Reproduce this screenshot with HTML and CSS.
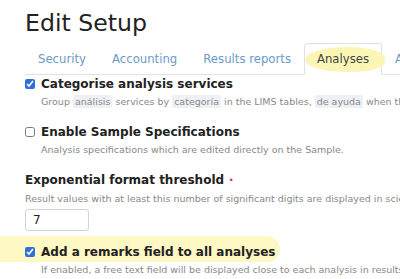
FILE: index.html
```html
<!DOCTYPE html>
<html lang="en">
<head>
  <meta charset="UTF-8" />
  <meta name="viewport" content="width=device-width, initial-scale=1.0" />
  <title>Edit Setup</title>
  <link rel="stylesheet" href="styles.css">
</head>
<body>
  <div class="page">
    <h1>Edit Setup</h1>

    <ul class="tabs">
      <li><a href="#security">Security</a></li>
      <li><a href="#accounting">Accounting</a></li>
      <li><a href="#results">Results reports</a></li>
      <li class="active"><a href="#analyses"><span class="marker">Analyses</span></a></li>
      <li><a href="#appearance">Appearance</a></li>
    </ul>

    <div class="fields">
      <div class="field">
        <label class="check"><input type="checkbox" checked> Categorise analysis services</label>
        <p class="help">Group <span class="term">análisis</span> services by <span class="term">categoría</span> in the LIMS tables, <span class="term">de ayuda</span> when the list is long</p>
      </div>

      <div class="field">
        <label class="check"><input type="checkbox"> Enable Sample Specifications</label>
        <p class="help">Analysis specifications which are edited directly on the Sample.</p>
      </div>

      <div class="field">
        <label class="title">Exponential format threshold <span class="required">·</span></label>
        <p class="help">Result values with at least this number of significant digits are displayed in scientific notation</p>
        <input class="number" type="text" value="7">
      </div>

      <div class="field highlighted">
        <label class="check"><input type="checkbox" checked> Add a remarks field to all analyses</label>
        <p class="help">If enabled, a free text field will be displayed close to each analysis in results entry view</p>
      </div>
    </div>
  </div>
</body>
</html>
```

FILE: styles.css
```css
body {
  font-family: 'DejaVu Sans', sans-serif;
  margin: 0;
  padding: 0;
  color: #222;
  background: #fff;
  overflow: hidden;
}
.page {
  padding: 9px 0 0 25px;
  white-space: nowrap;
}
h1 {
  font-size: 23.6px;
  font-weight: normal;
  line-height: 1.2;
  margin: 0 0 6px 0;
  color: #222;
}
.tabs {
  list-style: none;
  display: flex;
  margin: 0;
  padding: 0;
  border-bottom: 1px solid #dee2e6;
}
.tabs li {
  margin-bottom: -1px;
}
.tabs a {
  display: block;
  padding: 8px 12px;
  font-size: 11.7px;
  line-height: 14px;
  color: #6a9bc8;
  text-decoration: none;
  border: 1px solid transparent;
  border-radius: 4px 4px 0 0;
}
.tabs .active a {
  color: #444;
  background: #fff;
  border-color: #dee2e6 #dee2e6 #fff;
}
.marker {
  position: relative;
  z-index: 0;
}
.marker::before {
  content: "";
  position: absolute;
  left: -12px;
  right: -16px;
  top: -5px;
  bottom: -6px;
  background: #fbf6b6;
  border-radius: 50% 45% 40% 50%;
  z-index: -1;
}
.field {
  position: relative;
  margin-bottom: 14px;
}
.field:nth-child(3) {
  margin-bottom: 12px;
}
.check, .title {
  display: flex;
  align-items: center;
  gap: 6px;
  font-size: 12px;
  font-weight: bold;
  line-height: 18px;
}
.title {
  margin-bottom: 3px;
}
.check input {
  width: 10px;
  height: 10px;
  margin: 0;
  accent-color: #2f6fd8;
}
.help {
  font-size: 9.5px;
  line-height: 14px;
  color: #888;
  margin: 2px 0 0 16px;
}
.title + .help {
  margin-left: 0;
}
.term {
  background: #edf1f5;
  border-radius: 2px;
  padding: 1px 2px;
}
.required {
  color: #e0303a;
  font-weight: bold;
  margin-left: -1px;
}
.number {
  font-family: inherit;
  font-size: 12px;
  width: 48px;
  padding: 3px 7px;
  margin-top: 3px;
  border: 1px solid #ced4da;
  border-radius: 3px;
  color: #222;
}
.highlighted::before {
  content: "";
  position: absolute;
  left: -25px;
  top: -7px;
  width: 280px;
  height: 26px;
  background: #fdf8c4;
  border-radius: 0 14px 12px 0 / 0 50% 50% 0;
  z-index: -1;
}
```
